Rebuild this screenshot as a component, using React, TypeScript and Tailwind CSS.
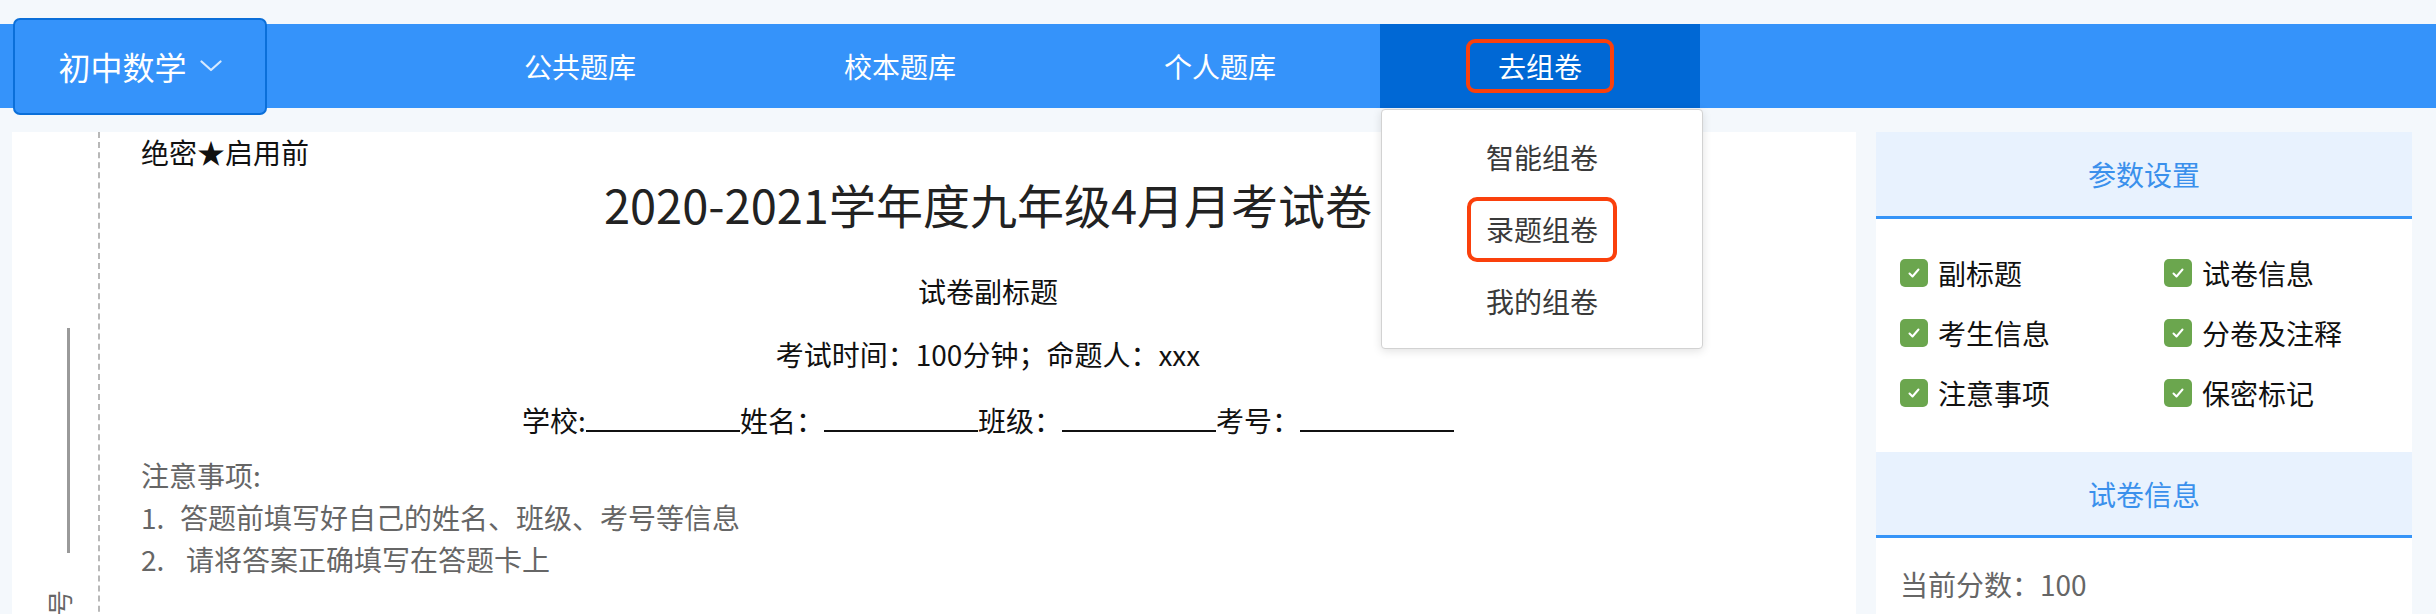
import React from "react";

const font = { fontFamily: '"Noto Sans CJK SC", "Noto Sans", sans-serif' };

function Check({ label }: { label: string }) {
  return (
    <div className="flex h-[60px] items-center gap-[10px]">
      <span className="flex h-[28px] w-[28px] items-center justify-center rounded-[5px] bg-[#6ba64e]">
        <svg width="16" height="16" viewBox="0 0 16 16" fill="none">
          <path d="M3.5 8.5 L6.5 11.5 L12.5 4.5" stroke="white" strokeWidth="2" strokeLinecap="round" strokeLinejoin="round" />
        </svg>
      </span>
      <span className="text-[28px] leading-[36px] text-[#111]">{label}</span>
    </div>
  );
}

function Blank() {
  return <span className="inline-block h-[30px] w-[154px] border-b-2 border-[#111] align-baseline" />;
}

export default function App() {
  return (
    <div className="h-[614px] w-full overflow-hidden bg-[#f4f8fc]" style={font}>
      {/* top bar */}
      <div className="mt-[24px] flex h-[84px] items-center bg-[#3593fa]">
        <div className="ml-[13px] flex h-[97px] w-[254px] shrink-0 items-center justify-center gap-[13px] rounded-[7px] border-2 border-[#0b6fd9] bg-[#3593fa]">
          <span className="text-[32px] leading-[40px] text-white">初中数学</span>
          <svg width="22" height="12" viewBox="0 0 22 12" fill="none">
            <path d="M1.5 1.5 L11 10 L20.5 1.5" stroke="rgba(255,255,255,0.8)" strokeWidth="2.2" strokeLinecap="round" strokeLinejoin="round" />
          </svg>
        </div>
        <div className="ml-[153px] flex h-full">
          <div className="flex h-full w-[320px] items-center justify-center text-[28px] text-white">公共题库</div>
          <div className="flex h-full w-[320px] items-center justify-center text-[28px] text-white">校本题库</div>
          <div className="flex h-full w-[320px] items-center justify-center text-[28px] text-white">个人题库</div>
          <div className="relative flex h-full w-[320px] items-center justify-center bg-[#0068d5]">
            <div className="flex h-[54px] w-[148px] items-center justify-center rounded-[9px] border-[4px] border-[#fa400c] text-[28px] leading-[36px] text-white">
              去组卷
            </div>
            <div className="absolute left-[1px] top-[85px] z-10 w-[322px] rounded-[4px] border border-[#d2d2d2] bg-white py-[11px] shadow-[0_2px_10px_rgba(0,0,0,0.12)]">
              <div className="flex h-[72px] items-center justify-center text-[28px] text-[#3a3a3a]">智能组卷</div>
              <div className="flex h-[72px] items-center justify-center">
                <div className="flex h-[65px] w-[150px] items-center justify-center rounded-[10px] border-[4px] border-[#fa400c] text-[28px] text-[#3a3a3a]">
                  录题组卷
                </div>
              </div>
              <div className="flex h-[72px] items-center justify-center text-[28px] text-[#3a3a3a]">我的组卷</div>
            </div>
          </div>
        </div>
      </div>

      {/* main */}
      <div className="mt-[24px] flex gap-[20px] pl-[12px] pr-[24px]">
        {/* paper */}
        <div className="flex h-[520px] flex-1 bg-white">
          <div className="flex w-[88px] shrink-0 flex-col border-r-2 border-dashed border-[#b8b8b8]">
            <div className="ml-[55px] mt-[196px] h-[225px] w-[3px] bg-[#9a9a9a]" />
            <div className="ml-[33px] mt-[35px] h-[28px] w-[28px] -rotate-90 text-[26px] leading-[28px] text-[#666]">号</div>
          </div>
          <div className="flex-1 pl-[41px] pr-[21px] pt-[2px]">
            <div className="text-[28px] leading-[36px] text-[#111]">绝密★启用前</div>
            <div className="mt-[6px] text-center text-[47px] leading-[56px] text-[#222]">2020-2021学年度九年级4月月考试卷</div>
            <div className="mt-[39px] text-center text-[28px] leading-[40px] text-[#111]">试卷副标题</div>
            <div className="mt-[23px] text-center text-[28px] leading-[40px] text-[#111]">考试时间：100分钟；命题人：xxx</div>
            <div className="mt-[26px] text-center text-[28px] leading-[40px] text-[#111]">
              学校:<Blank />姓名：<Blank />班级：<Blank />考号：<Blank />
            </div>
            <div className="mt-[14px] text-[28px] leading-[42px] text-[#666]">
              <div>注意事项:</div>
              <div>
                <span className="inline-block w-[39px]">1.</span>答题前填写好自己的姓名、班级、考号等信息
              </div>
              <div>
                <span className="inline-block w-[45px]">2.</span>请将答案正确填写在答题卡上
              </div>
            </div>
          </div>
        </div>

        {/* right panel */}
        <div className="flex w-[536px] shrink-0 flex-col">
          <div className="flex h-[87px] items-center justify-center border-b-[3px] border-[#3594f8] bg-[#e8f2fe] text-[28px] text-[#3a90ec]">
            参数设置
          </div>
          <div className="grid h-[233px] grid-cols-[264px_1fr] content-start bg-white pl-[24px] pt-[24px]">
            <Check label="副标题" />
            <Check label="试卷信息" />
            <Check label="考生信息" />
            <Check label="分卷及注释" />
            <Check label="注意事项" />
            <Check label="保密标记" />
          </div>
          <div className="flex h-[86px] items-center justify-center border-b-[3px] border-[#3594f8] bg-[#e8f2fe] text-[28px] text-[#3a90ec]">
            试卷信息
          </div>
          <div className="h-[200px] bg-white pl-[24px] pt-[28px] text-[28px] leading-[36px] text-[#666]">当前分数：100</div>
        </div>
      </div>
    </div>
  );
}
